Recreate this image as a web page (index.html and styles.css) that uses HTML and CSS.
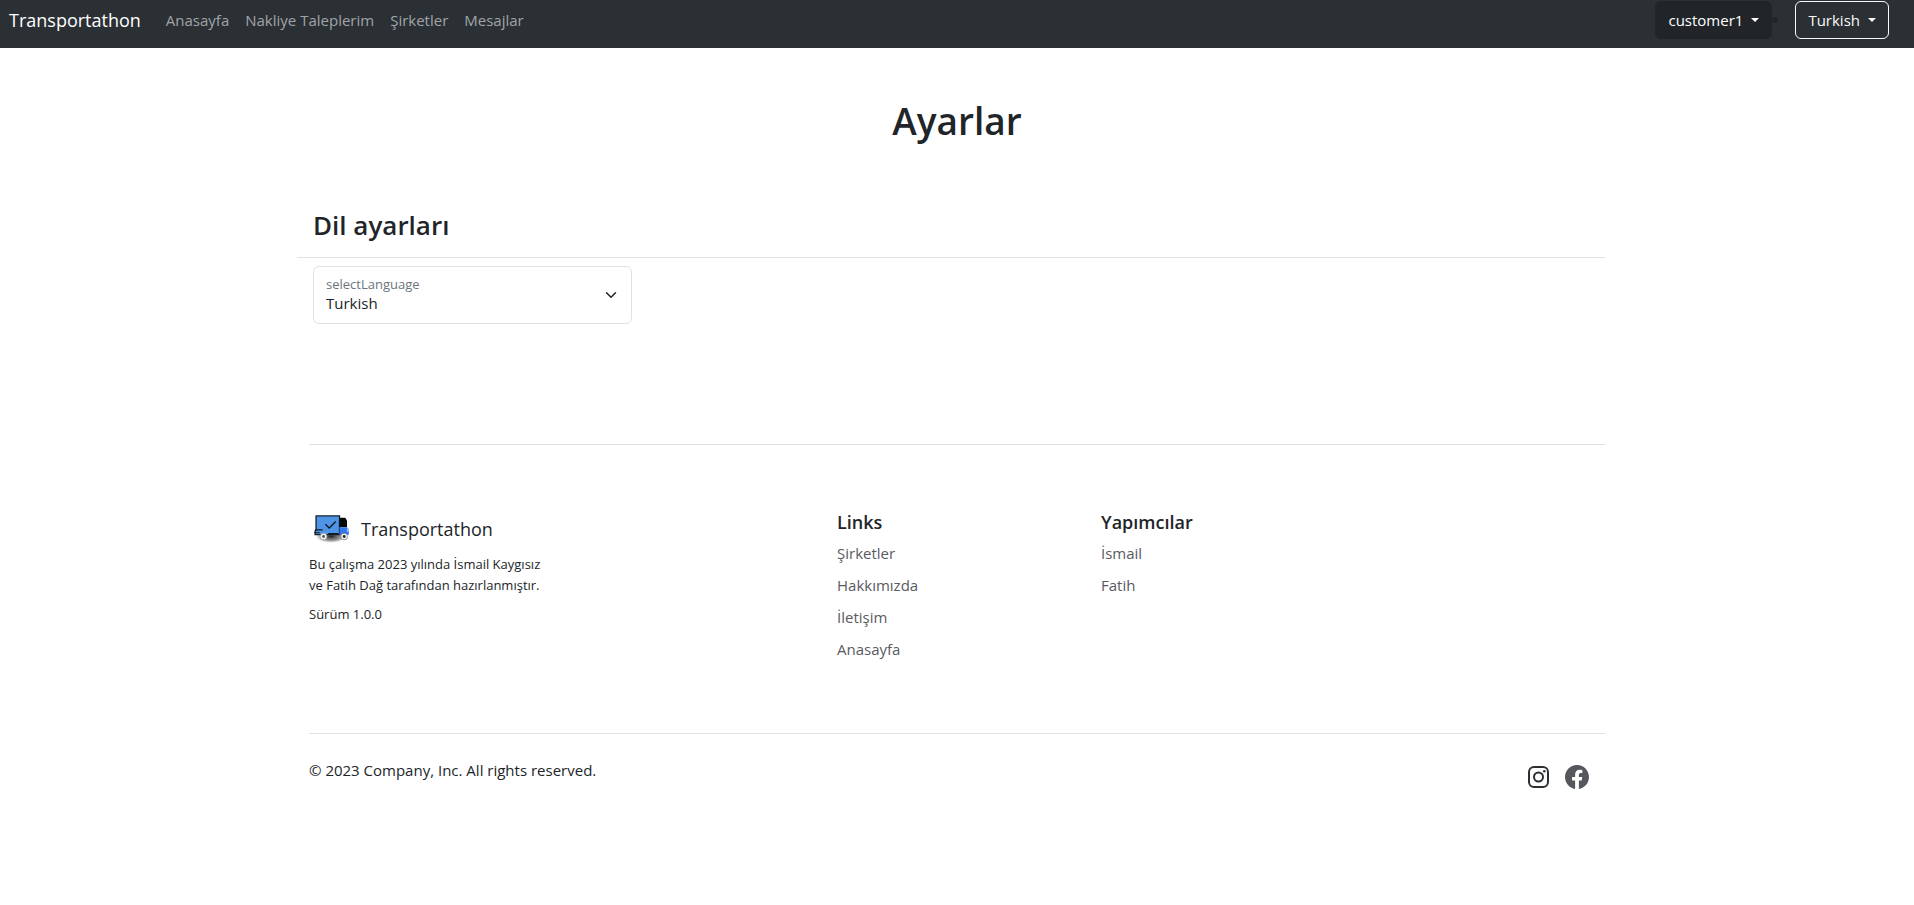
FILE: index.html
```html
<!DOCTYPE html>
<html lang="tr">
<head>
<meta charset="utf-8">
<meta name="viewport" content="width=device-width, initial-scale=1">
<title>Transportathon</title>
<link rel="stylesheet" href="styles.css">
</head>
<body>
<nav class="navbar">
  <a class="navbar-brand" href="#">Transportathon</a>
  <ul class="nav-links">
    <li><a href="#">Anasayfa</a></li>
    <li><a href="#">Nakliye Taleplerim</a></li>
    <li><a href="#">Şirketler</a></li>
    <li><a href="#">Mesajlar</a></li>
  </ul>
  <div class="nav-actions">
    <ul class="user-menu">
      <li><button class="btn btn-dark" type="button">customer1<span class="caret"></span></button></li>
      <li class="menu-dot"></li>
    </ul>
    <button class="btn btn-outline" type="button">Turkish<span class="caret"></span></button>
  </div>
</nav>

<main class="container">
  <h1 class="page-title">Ayarlar</h1>
  <section>
    <h2 class="section-title">Dil ayarları</h2>
    <div class="form-floating">
      <select class="form-select" id="language">
        <option selected>Turkish</option>
        <option>English</option>
      </select>
      <label for="language">selectLanguage</label>
      <svg class="chevron" viewBox="0 0 16 16" aria-hidden="true"><path d="m2 5 6 6 6-6"/></svg>
    </div>
  </section>
</main>

<footer class="container">
  <div class="footer-columns">
    <div class="footer-about">
      <a class="footer-brand" href="#">
        <svg class="truck" viewBox="0 0 40 32" aria-hidden="true">
          <defs>
            <radialGradient id="shade">
              <stop offset="0" stop-color="#222"/>
              <stop offset=".65" stop-color="#777" stop-opacity=".7"/>
              <stop offset="1" stop-color="#bbb" stop-opacity="0"/>
            </radialGradient>
          </defs>
          <ellipse cx="19" cy="24" rx="17" ry="7" fill="url(#shade)"/>
          <path d="M3 2h25v20H2v-4l1-1z" fill="#4f95e6" stroke="#15202c" stroke-width="1.4"/>
          <path d="M28 4h6l2 3v7h-8z" fill="#050608"/>
          <path d="M28 14h8l2 2v6H28z" fill="#3478ef"/>
          <path d="M36 15l2 1v3h-2z" fill="#9fc4ff"/>
          <path d="M2 17h8M1 20h6M16 21h11" fill="none" stroke="#111820" stroke-width="1.3"/>
          <path d="m13 11 4 4 7-7" fill="none" stroke="#0c1826" stroke-width="1.4"/>
          <circle cx="11" cy="24" r="3.6" fill="#f4f4f4" stroke="#888" stroke-width=".6"/>
          <circle cx="11" cy="24" r="1.5" fill="#555"/>
          <circle cx="33" cy="24" r="3.6" fill="#f4f4f4" stroke="#555" stroke-width=".6"/>
          <circle cx="33" cy="24" r="1.5" fill="#222"/>
        </svg>
        <span>Transportathon</span>
      </a>
      <p>Bu çalışma 2023 yılında İsmail Kaygısız ve Fatih Dağ tarafından hazırlanmıştır.</p>
      <p>Sürüm 1.0.0</p>
    </div>
    <div class="footer-links">
      <h3>Links</h3>
      <ul>
        <li><a href="#">Şirketler</a></li>
        <li><a href="#">Hakkımızda</a></li>
        <li><a href="#">İletişim</a></li>
        <li><a href="#">Anasayfa</a></li>
      </ul>
    </div>
    <div class="footer-links">
      <h3>Yapımcılar</h3>
      <ul>
        <li><a href="#">İsmail</a></li>
        <li><a href="#">Fatih</a></li>
      </ul>
    </div>
  </div>
  <div class="footer-bottom">
    <p>© 2023 Company, Inc. All rights reserved.</p>
    <div class="social">
      <a href="#" aria-label="Instagram">
        <svg viewBox="0 0 24 24" aria-hidden="true"><g fill="none" stroke="#2b3035" stroke-width="2"><rect x="2" y="2" width="19" height="20" rx="5"/><circle cx="11.500" cy="12" r="4.5"/></g><circle cx="17.300" cy="6.200" r="1.300" fill="#2b3035"/></svg>
      </a>
      <a href="#" aria-label="Facebook">
        <svg viewBox="0 0 16 16" aria-hidden="true"><path fill="#54585c" d="M16 8.049c0-4.446-3.582-8.05-8-8.05C3.580 0-.002 3.603-.002 8.050c0 4.017 2.926 7.347 6.750 7.951v-5.625h-2.030V8.050H6.750V6.275c0-2.017 1.195-3.131 3.022-3.131.876 0 1.791.157 1.791.157v1.980h-1.009c-.993 0-1.303.621-1.303 1.258v1.510h2.218l-.354 2.326H9.250V16c3.824-.604 6.750-3.934 6.750-7.951z"/></svg>
      </a>
    </div>
  </div>
</footer>
</body>
</html>
```

FILE: styles.css
```css
* {
  box-sizing: border-box;
}

body {
  margin: 0;
  background: #fff;
  color: #212529;
  font-family: "Open Sans", "Noto Sans", sans-serif;
  font-size: 15px;
  line-height: 24px;
}

h1, h2, h3, p, ul {
  margin: 0;
  padding: 0;
}

h1, h2, h3 {
  font-weight: 600;
}

ul {
  list-style: none;
}

a {
  color: inherit;
  text-decoration: none;
}

.navbar {
  display: flex;
  align-items: center;
  padding: 1px 25px 9px 9px;
  background: #2b3035;
  color: #fff;
}

.navbar-brand {
  margin-right: 25px;
  font-size: 18px;
}

.nav-links {
  display: flex;
  gap: 16px;
  color: #a1a4a7;
}

.nav-actions {
  display: flex;
  gap: 17px;
  margin-left: auto;
}

.user-menu {
  display: flex;
  align-items: center;
}

.menu-dot {
  width: 6px;
  height: 6px;
  border-radius: 50%;
  background: #212529;
}

.btn {
  display: flex;
  align-items: center;
  gap: 8px;
  padding: 6px 12px;
  border: 1px solid #212529;
  border-radius: 6px;
  background: #212529;
  color: #fff;
  font: inherit;
}

.btn-outline {
  border-color: #f8f9fa;
  background: transparent;
  color: #f8f9fa;
}

.caret {
  border: 4px solid transparent;
  border-top-color: currentColor;
  border-bottom: 0;
}

.container {
  max-width: 1320px;
  margin: 0 auto;
}

.page-title {
  padding: 49px 0 47px;
  font-size: 37px;
  line-height: 48px;
  text-align: center;
}

.section-title {
  margin-right: 12px;
  padding: 16px 16px 15px;
  border-bottom: 1px solid #dee2e6;
  font-size: 26px;
  line-height: 34px;
}

.form-floating {
  position: relative;
  width: 319px;
  margin: 8px 16px 120px;
}

.form-select {
  display: block;
  width: 100%;
  height: 58px;
  padding: 18px 36px 2px 12px;
  border: 1px solid #dee2e6;
  border-radius: 6px;
  appearance: none;
  background: #fff;
  color: #212529;
  font: inherit;
}

.form-floating label {
  position: absolute;
  top: 8px;
  left: 13px;
  color: #6c757d;
  font-size: 13px;
  line-height: 20px;
  pointer-events: none;
}

.chevron {
  position: absolute;
  top: 23px;
  right: 15px;
  width: 12px;
  height: 12px;
  fill: none;
  stroke: #212529;
  stroke-width: 2;
  stroke-linecap: round;
  stroke-linejoin: round;
  pointer-events: none;
}

.footer-columns {
  display: grid;
  grid-template-columns: 22fr 11fr 21fr;
  margin: 0 12px;
  padding: 65px 0 64px;
  border-top: 1px solid #dee2e6;
}

.footer-about p {
  max-width: 248px;
  margin-bottom: 8px;
  font-size: 13px;
  line-height: 21px;
}

.footer-brand {
  display: flex;
  align-items: center;
  gap: 10px;
  margin-bottom: 8px;
  padding: 2px 0 0 4px;
  font-size: 18px;
  line-height: 34px;
}

.truck {
  width: 38px;
  height: 30px;
}

.footer-links h3 {
  margin-bottom: 7px;
  font-size: 18px;
  line-height: 24px;
}

.footer-links li {
  margin-bottom: 8px;
  color: #585b5f;
}

.footer-bottom {
  display: flex;
  justify-content: space-between;
  margin: 0 12px;
  padding: 24px 16px 0 0;
  border-top: 1px solid #dee2e6;
}

.social {
  display: flex;
  gap: 14px;
  padding-top: 7px;
}

.social svg {
  display: block;
  width: 24px;
  height: 24px;
}
```
